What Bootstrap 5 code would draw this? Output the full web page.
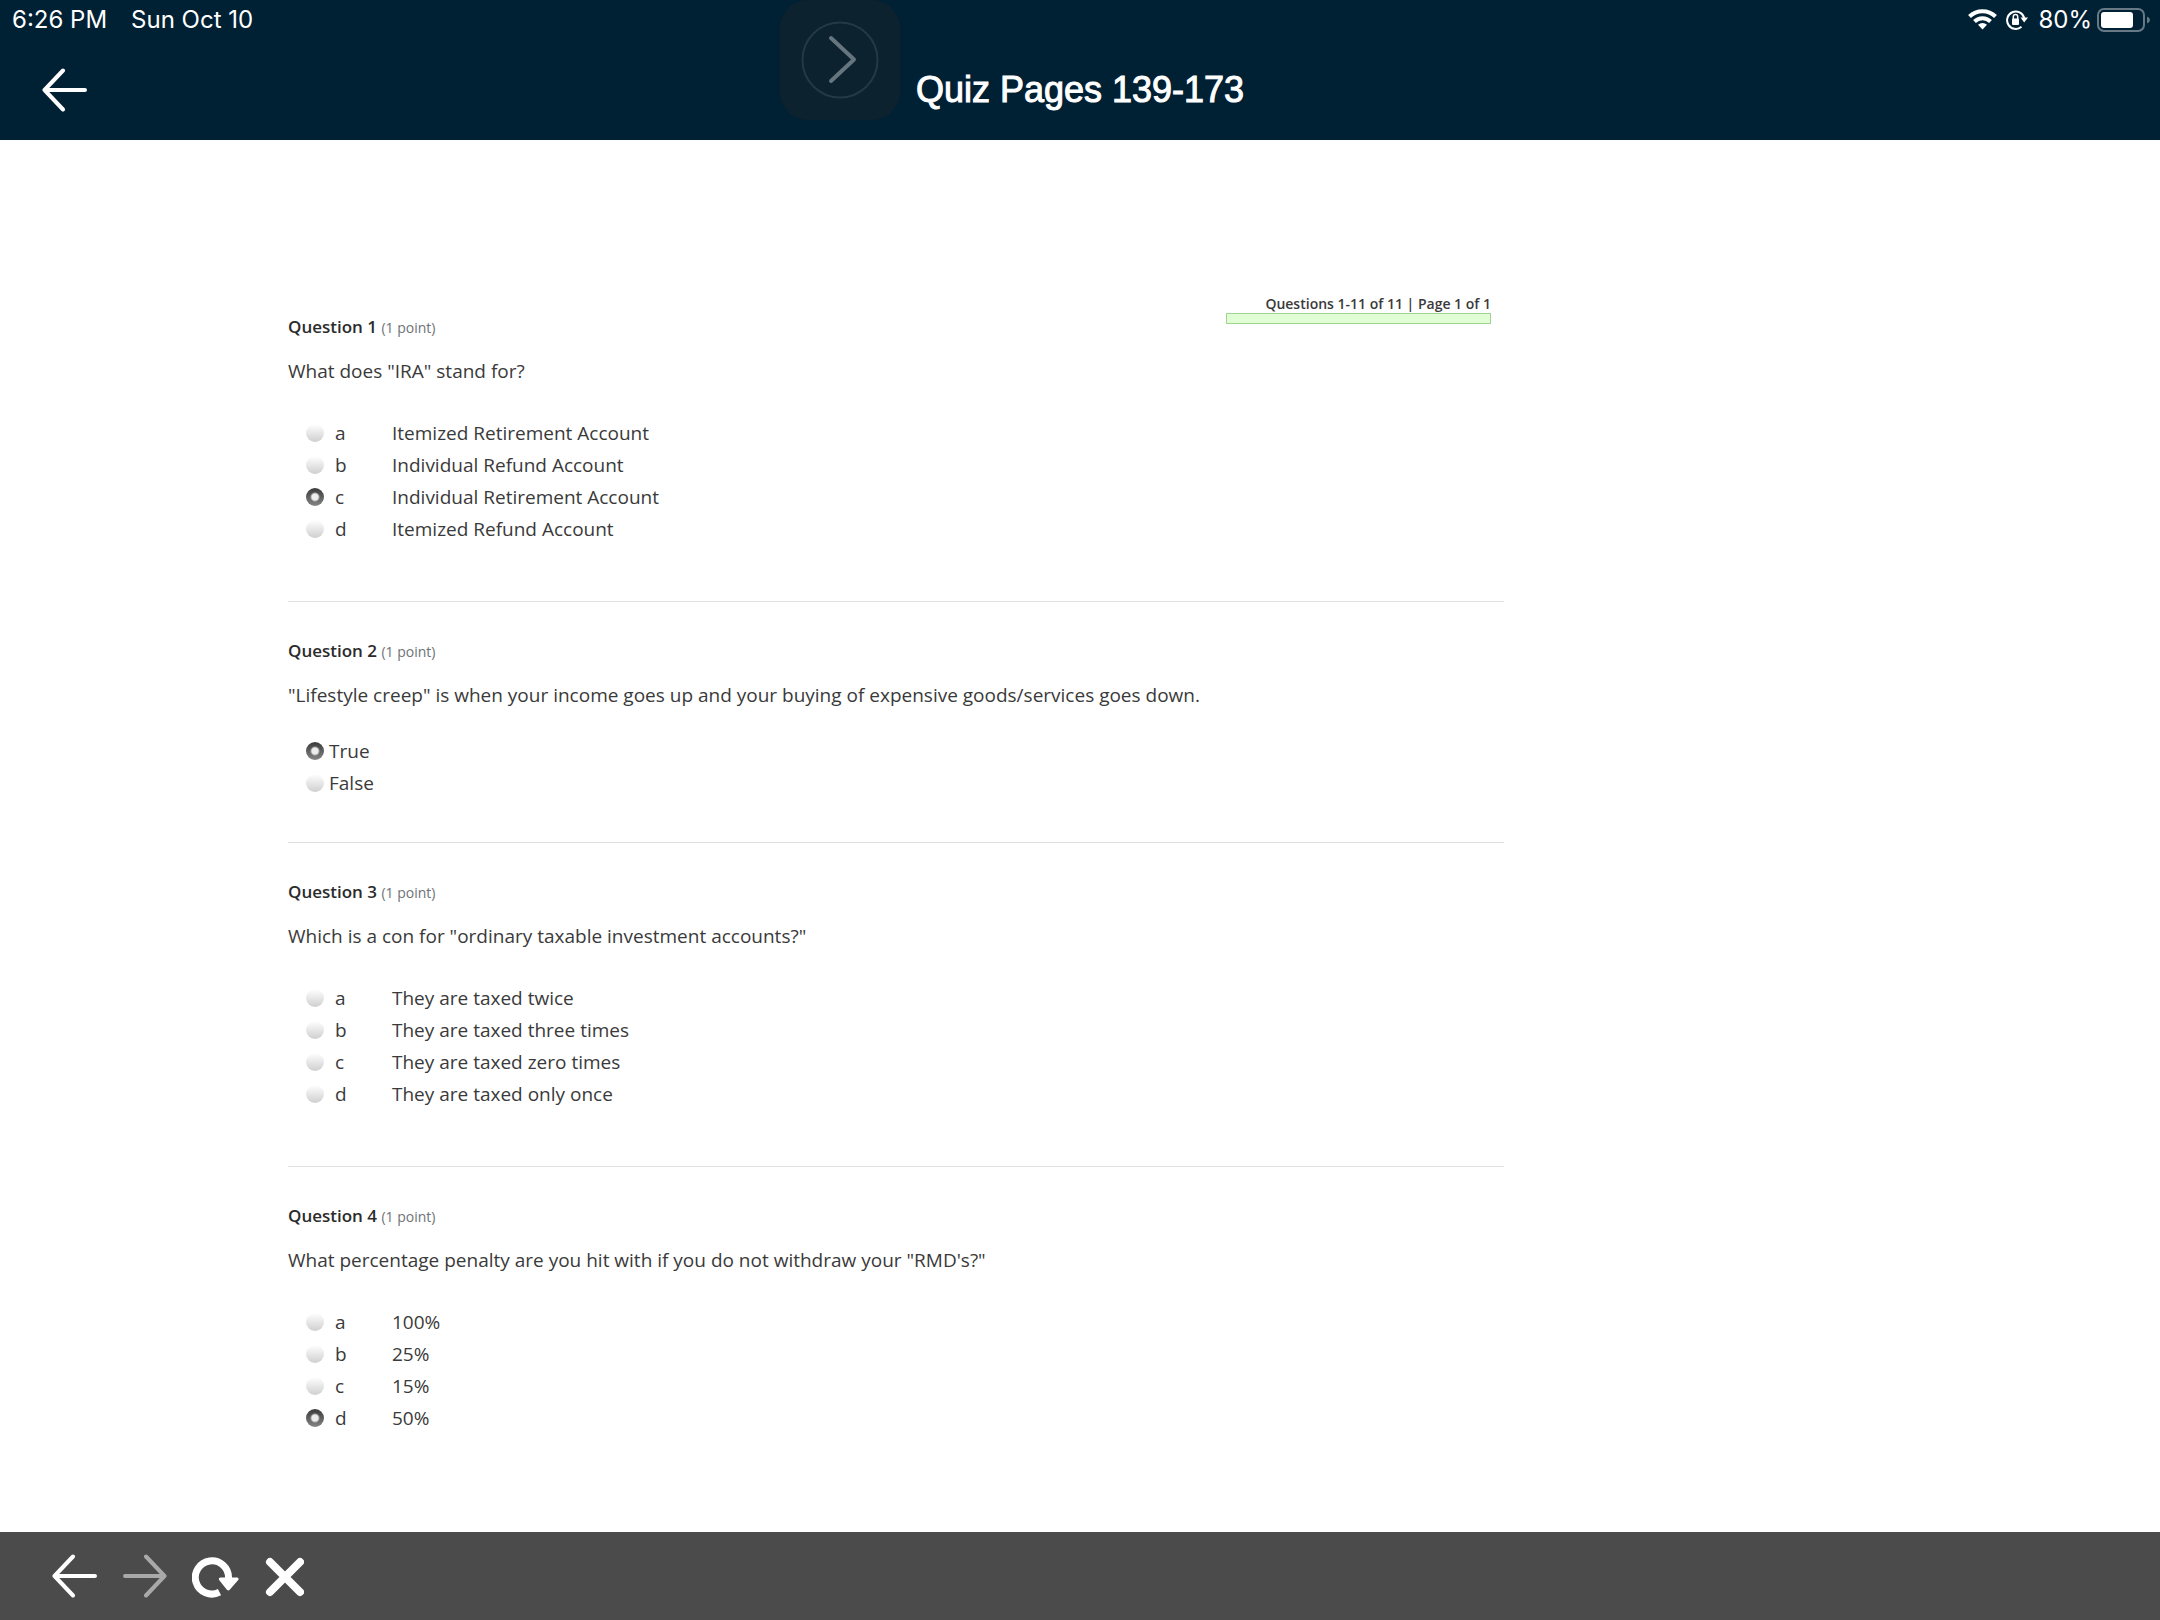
<!DOCTYPE html>
<html lang="en">
<head>
<meta charset="utf-8">
<meta name="viewport" content="width=device-width, initial-scale=1">
<title>Quiz Pages 139-173</title>
<link rel="stylesheet" href="https://cdn.jsdelivr.net/npm/bootstrap@5.3.0/dist/css/bootstrap.min.css">
<style>
body { font-family: "Open Sans", sans-serif; color: #3a3a3a; background: #fff; }
svg { display: block; }
.icon-btn { border: 0; padding: 0; background: none; color: #fff; }
.icon-btn:disabled { color: #a9a9a9; }
.app-header { background: #002034; color: #fff; height: 140px; }
.status-line { font: 400 24px/40px Inter, sans-serif; padding: 0 10px 0 12px; }
.title-line { height: 100px; padding: 0 42px; }
.title-line h1 { font: 400 36px/40px "Liberation Sans", sans-serif; -webkit-text-stroke: 1px #fff; }
.side-slot { flex: 1 1 0; }
.pull-tab { width: 120px; height: 120px; left: 780px; background: #0c222e; border-radius: 28px; }
.quiz-body { padding: 154px 288px 0; }
.quiz-column { max-width: 1216px; }
.question { border-bottom: 1px solid #e0e0e0; padding: 37px 0 56px; }
.question.first-question { padding-top: 0; }
.question.true-false { padding-bottom: 43px; }
.question:last-child { border-bottom: 0; }
.question h2 { font-size: 17px; line-height: 24px; font-weight: 600; margin: 0 0 17px; color: #2b2b2b; }
.first-question h2 { padding-top: 21px; }
.question h2 span { font-size: 14px; font-weight: 400; color: #6e7376; }
.prompt { font-size: 19px; line-height: 28px; margin: 0 0 32px; }
.true-false .prompt { margin-bottom: 26px; }
.choices label { font-size: 19px; line-height: 32px; height: 32px; padding-left: 18px; gap: 11px; width: fit-content; }
.true-false .choices label { gap: 5px; }
.letter { width: 46px; }
.choices input { appearance: none; width: 18px; height: 18px; margin: 0; border-radius: 50%; background: linear-gradient(#fff, #ececec 40%, #cfcfcf); }
.choices input:checked { background: radial-gradient(circle, #ededed 0 3px, transparent 5px), linear-gradient(#3a3a3a, #858585); }
.page-status { width: 265px; margin-right: 13px; }
.page-status p { font-size: 14px; line-height: 19px; font-weight: 600; }
.page-status .progress { height: 11px; border-radius: 0; border: 1px solid #a0d491; background: #e1fdd5; }
.page-status .progress-bar { background: #e1fdd5; }
.browser-bar { background: #4b4b4b; height: 88px; padding: 0 52px; gap: 24px; }
</style>
<script src="https://cdn.jsdelivr.net/npm/bootstrap@5.3.0/dist/js/bootstrap.bundle.min.js"></script>
</head>
<body class="d-flex flex-column min-vh-100">
<header class="app-header position-relative">
  <div class="status-line d-flex justify-content-between">
    <div class="d-flex gap-4"><span>6:26 PM</span><span>Sun Oct 10</span></div>
    <div class="d-flex align-items-center">
      <svg class="me-2" width="30" height="24" viewBox="0 0 30 24" fill="none" stroke="#fff" stroke-width="4" aria-label="Wi-Fi"><path d="M1.500 8.500a18.500 18.500 0 0 1 26 0M6.500 13.500a11.500 11.500 0 0 1 16 0"/><path d="M10 16.800a6.500 6.500 0 0 1 9 0L14.500 21.500z" fill="#fff" stroke="none"/></svg>
      <svg class="me-2" width="24" height="24" viewBox="0 0 24 24" aria-label="Rotation lock"><path d="M15.500 18.800A8.700 8.700 0 1 1 18.200 10" fill="none" stroke="#fff" stroke-width="2"/><path d="M14.500 9.500h7.500L18.200 14.500z" fill="#fff"/><rect x="6" y="10.500" width="7" height="6.500" rx="1" fill="#fff"/><path d="M7.300 11V8.800a2.200 2.200 0 0 1 4.400 0V11" fill="none" stroke="#fff" stroke-width="1.500"/></svg>
      <span class="me-1">80%</span>
      <svg width="54" height="26" viewBox="0 0 54 26" aria-label="Battery"><rect x="2" y="2" width="46" height="22" rx="6" fill="none" stroke="#667985" stroke-width="2"/><rect x="5" y="5" width="32" height="16" rx="3" fill="#fff"/><path d="M51 9.500q3 1.200 3 3.500t-3 3.500z" fill="#667985"/></svg>
    </div>
  </div>
  <div class="title-line d-flex align-items-center">
    <div class="side-slot d-flex"><button class="icon-btn" type="button" aria-label="Back"><svg width="46" height="44" viewBox="0 0 46 44" fill="none" stroke="currentColor" stroke-width="4" stroke-linecap="round" stroke-linejoin="round"><path d="M21 2.500 2.500 22 21 41.500M2.500 22H43"/></svg></button></div>
    <h1 class="m-0">Quiz Pages 139-173</h1>
    <div class="side-slot"></div>
  </div>
  <button class="icon-btn pull-tab position-absolute top-0" type="button" aria-label="Show"><svg width="120" height="120" viewBox="0 0 120 120" fill="none"><circle cx="60" cy="60" r="37.500" stroke="#243947" stroke-width="2"/><path d="M51 38 74 59.500 51 81" stroke="#66757e" stroke-width="4" stroke-linecap="round" stroke-linejoin="round"/></svg></button>
</header>

<main class="quiz-body flex-grow-1">
  <form class="quiz-column">
    <section class="question first-question">
      <div class="d-flex justify-content-between align-items-start">
        <h2 id="q1">Question 1 <span>(1 point)</span></h2>
        <div class="page-status">
          <p class="m-0 text-end">Questions 1-11 of 11 | Page 1 of 1</p>
          <div class="progress" role="progressbar" aria-label="Quiz pages" aria-valuenow="100" aria-valuemin="0" aria-valuemax="100"><div class="progress-bar w-100"></div></div>
        </div>
      </div>
      <p class="prompt">What does "IRA" stand for?</p>
      <div class="choices" role="radiogroup" aria-labelledby="q1">
        <label class="d-flex align-items-center"><input type="radio" name="q1"><span class="letter">a</span><span>Itemized Retirement Account</span></label>
        <label class="d-flex align-items-center"><input type="radio" name="q1"><span class="letter">b</span><span>Individual Refund Account</span></label>
        <label class="d-flex align-items-center"><input type="radio" name="q1" checked><span class="letter">c</span><span>Individual Retirement Account</span></label>
        <label class="d-flex align-items-center"><input type="radio" name="q1"><span class="letter">d</span><span>Itemized Refund Account</span></label>
      </div>
    </section>
    <section class="question true-false">
      <h2 id="q2">Question 2 <span>(1 point)</span></h2>
      <p class="prompt">"Lifestyle creep" is when your income goes up and your buying of expensive goods/services goes down.</p>
      <div class="choices" role="radiogroup" aria-labelledby="q2">
        <label class="d-flex align-items-center"><input type="radio" name="q2" checked><span>True</span></label>
        <label class="d-flex align-items-center"><input type="radio" name="q2"><span>False</span></label>
      </div>
    </section>
    <section class="question">
      <h2 id="q3">Question 3 <span>(1 point)</span></h2>
      <p class="prompt">Which is a con for "ordinary taxable investment accounts?"</p>
      <div class="choices" role="radiogroup" aria-labelledby="q3">
        <label class="d-flex align-items-center"><input type="radio" name="q3"><span class="letter">a</span><span>They are taxed twice</span></label>
        <label class="d-flex align-items-center"><input type="radio" name="q3"><span class="letter">b</span><span>They are taxed three times</span></label>
        <label class="d-flex align-items-center"><input type="radio" name="q3"><span class="letter">c</span><span>They are taxed zero times</span></label>
        <label class="d-flex align-items-center"><input type="radio" name="q3"><span class="letter">d</span><span>They are taxed only once</span></label>
      </div>
    </section>
    <section class="question">
      <h2 id="q4">Question 4 <span>(1 point)</span></h2>
      <p class="prompt">What percentage penalty are you hit with if you do not withdraw your "RMD's?"</p>
      <div class="choices" role="radiogroup" aria-labelledby="q4">
        <label class="d-flex align-items-center"><input type="radio" name="q4"><span class="letter">a</span><span>100%</span></label>
        <label class="d-flex align-items-center"><input type="radio" name="q4"><span class="letter">b</span><span>25%</span></label>
        <label class="d-flex align-items-center"><input type="radio" name="q4"><span class="letter">c</span><span>15%</span></label>
        <label class="d-flex align-items-center"><input type="radio" name="q4" checked><span class="letter">d</span><span>50%</span></label>
      </div>
    </section>
  </form>
</main>

<footer class="browser-bar d-flex align-items-center">
  <button class="icon-btn" type="button" aria-label="Previous page"><svg width="46" height="44" viewBox="0 0 46 44" fill="none" stroke="currentColor" stroke-width="4" stroke-linecap="round" stroke-linejoin="round"><path d="M21 2.500 2.500 22 21 41.500M2.500 22H43"/></svg></button>
  <button class="icon-btn" type="button" aria-label="Next page" disabled><svg width="46" height="44" viewBox="0 0 46 44" fill="none" stroke="currentColor" stroke-width="4" stroke-linecap="round" stroke-linejoin="round"><path d="M24 2.500 42.500 22 24 41.500M42.500 22H3"/></svg></button>
  <button class="icon-btn" type="button" aria-label="Reload"><svg width="48" height="44" viewBox="0 0 48 44"><path d="M27.500 38.200A16.600 16.600 0 1 1 36.500 24" fill="none" stroke="#fff" stroke-width="7"/><path d="M28.500 23.500H45a1.500 1.500 0 0 1 1 2.700l-8.300 9.600a2 2 0 0 1-2.800 0l-7.600-9.600a1.600 1.600 0 0 1 1.200-2.700z" fill="#fff"/></svg></button>
  <button class="icon-btn" type="button" aria-label="Stop"><svg width="40" height="44" viewBox="0 0 40 44" stroke="#fff" fill="none" stroke-width="8" stroke-linecap="round"><path d="M6 8 36 38M36 8 6 38"/></svg></button>
</footer>
</body>
</html>
